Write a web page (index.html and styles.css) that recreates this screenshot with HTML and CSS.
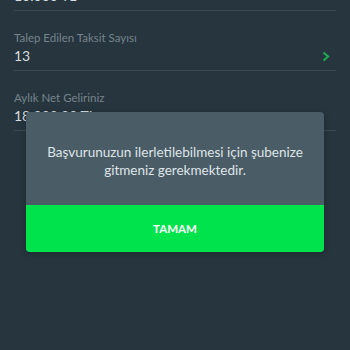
FILE: index.html
```html
<!DOCTYPE html>
<html lang="tr">
<head>
<meta charset="utf-8">
<link rel="stylesheet" href="styles.css">
</head>
<body>
<div class="screen">
  <div class="form">
    <div class="field">
      <div class="label">Talep Edilen Kredi Tutarı</div>
      <div class="value">10.000 TL</div>
    </div>
    <div class="field">
      <div class="label">Talep Edilen Taksit Sayısı</div>
      <div class="value row"><span>13</span>
        <svg class="chev" width="8" height="11" viewBox="0 0 8 11"><path d="M1.5 1.5 L6 5.5 L1.5 9.5" fill="none" stroke="#1fa84e" stroke-width="2.2" stroke-linejoin="miter"/></svg>
      </div>
    </div>
    <div class="field">
      <div class="label">Aylık Net Geliriniz</div>
      <div class="value">18.000,00 TL</div>
    </div>
  </div>
  <div class="dialog">
    <div class="msg">Başvurunuzun ilerletilebilmesi için şubenize gitmeniz gerekmektedir.</div>
    <div class="btn">TAMAM</div>
  </div>
</div>
</body>
</html>
```
FILE: styles.css
```css
html, body {
  margin: 0;
  padding: 0;
  background: #26353e;
}
.screen {
  position: relative;
  width: 350px;
  height: 350px;
  overflow: hidden;
  background: #26353e;
  font-family: Lato, "Noto Sans", sans-serif;
}
.form {
  margin-top: -49px;
  padding: 0 14px;
}
.field {
  padding-top: 19px;
  padding-bottom: 5px;
  border-bottom: 1px solid #3a4a53;
}
.label {
  font-size: 11.5px;
  line-height: 16px;
  color: #76848c;
}
.value {
  margin-top: 1px;
  font-size: 14px;
  line-height: 18px;
  color: #d6dcdf;
}
.row {
  display: flex;
  justify-content: space-between;
  align-items: center;
}
.chev {
  margin-right: 6px;
}
.dialog {
  position: absolute;
  left: 26px;
  top: 112px;
  width: 298px;
  border-radius: 4px;
  overflow: hidden;
  background: #4a5c66;
  box-shadow: 0 2px 6px rgba(0,0,0,0.25);
}
.msg {
  padding: 31px 14px 26px;
  height: 36px;
  text-align: center;
  font-size: 13.5px;
  line-height: 18px;
  color: #dfe5e8;
}
.btn {
  height: 47px;
  background: #00e34d;
  color: #ffffff;
  font-weight: bold;
  font-size: 11.5px;
  display: flex;
  align-items: center;
  justify-content: center;
}
```
